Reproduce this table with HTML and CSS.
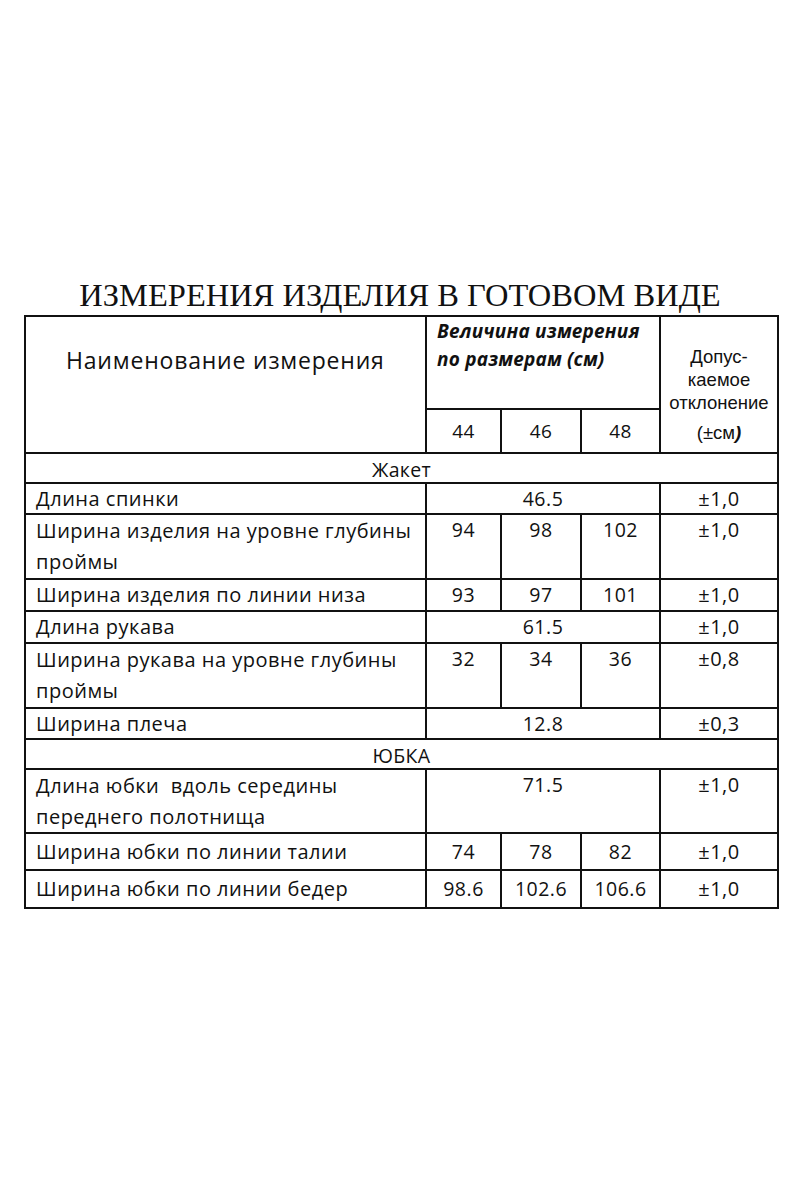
FILE: index.html
```html
<!DOCTYPE html>
<html lang="ru">
<head>
<meta charset="utf-8">
<title>Измерения изделия</title>
<link rel="stylesheet" href="styles.css">
</head>
<body>
<h1 class="title">ИЗМЕРЕНИЯ ИЗДЕЛИЯ В ГОТОВОМ ВИДЕ</h1>
<table class="spec">
  <colgroup>
    <col class="c-name">
    <col class="c-s1">
    <col class="c-s2">
    <col class="c-s3">
    <col class="c-tol">
  </colgroup>
  <tr class="r-head1">
    <th rowspan="2" class="name-h">Наименование измерения</th>
    <th colspan="3" class="size-h">Величина измерения<br>по размерам (см)</th>
    <th rowspan="2" class="tol-h"><span class="tl">Допус-</span><span class="tl">каемое</span><span class="tl">отклонение</span><span class="tl last">(±см<i>)</i></span></th>
  </tr>
  <tr class="r-head2">
    <th class="sz">44</th>
    <th class="sz">46</th>
    <th class="sz">48</th>
  </tr>
  <tr class="r-sec"><td colspan="5" class="sec">Жакет</td></tr>
  <tr class="r-1a">
    <td class="nm">Длина спинки</td>
    <td colspan="3" class="v">46.5</td>
    <td class="tol">±1,0</td>
  </tr>
  <tr class="r-2">
    <td class="nm">Ширина изделия на уровне глубины проймы</td>
    <td class="v">94</td><td class="v">98</td><td class="v">102</td>
    <td class="tol">±1,0</td>
  </tr>
  <tr class="r-1b">
    <td class="nm">Ширина изделия по линии низа</td>
    <td class="v">93</td><td class="v">97</td><td class="v">101</td>
    <td class="tol">±1,0</td>
  </tr>
  <tr class="r-1b">
    <td class="nm">Длина рукава</td>
    <td colspan="3" class="v">61.5</td>
    <td class="tol">±1,0</td>
  </tr>
  <tr class="r-2">
    <td class="nm">Ширина рукава на уровне глубины проймы</td>
    <td class="v">32</td><td class="v">34</td><td class="v">36</td>
    <td class="tol">±0,8</td>
  </tr>
  <tr class="r-1">
    <td class="nm">Ширина плеча</td>
    <td colspan="3" class="v">12.8</td>
    <td class="tol">±0,3</td>
  </tr>
  <tr class="r-sec"><td colspan="5" class="sec">ЮБКА</td></tr>
  <tr class="r-2b">
    <td class="nm">Длина юбки&nbsp; вдоль середины<br>переднего полотнища</td>
    <td colspan="3" class="v">71.5</td>
    <td class="tol">±1,0</td>
  </tr>
  <tr class="r-3">
    <td class="nm">Ширина юбки по линии талии</td>
    <td class="v">74</td><td class="v">78</td><td class="v">82</td>
    <td class="tol">±1,0</td>
  </tr>
  <tr class="r-3b">
    <td class="nm">Ширина юбки по линии бедер</td>
    <td class="v">98.6</td><td class="v">102.6</td><td class="v">106.6</td>
    <td class="tol">±1,0</td>
  </tr>
</table>
</body>
</html>
```
FILE: styles.css
```css
html, body {
  margin: 0;
  padding: 0;
  background: #fff;
  color: #111;
}
body {
  width: 800px;
  height: 1200px;
  font-family: "Open Sans", "Noto Sans", sans-serif;
}
.title {
  margin: 0;
  padding-top: 275px;
  font-family: "Liberation Serif", serif;
  font-weight: normal;
  font-size: 32.5px;
  line-height: 40px;
  text-align: center;
  color: #111;
}
.spec {
  margin-left: 24px;
  width: 755px;
  table-layout: fixed;
  border-collapse: collapse;
}
.c-name { width: 401px; }
.c-s1 { width: 75px; }
.c-s2 { width: 80px; }
.c-s3 { width: 79px; }
.c-tol { width: 118px; }
.spec th, .spec td {
  border: 2px solid #111;
  padding: 0;
  font-weight: normal;
  vertical-align: top;
  font-size: 20px;
  line-height: 29px;
  letter-spacing: 0.5px;
}
.spec .r-head1 { height: 93px; }
.spec .r-head2 { height: 44px; }
.spec .name-h {
  text-align: left;
  padding: 28px 0 0 40px;
  font-size: 23px;
  line-height: 30px;
  letter-spacing: 0.8px;
}
.spec .size-h {
  text-align: left;
  padding: 0 0 0 10px;
  font-weight: bold;
  font-style: italic;
  font-size: 19px;
  line-height: 28px;
  letter-spacing: 0.2px;
}
.spec .tol-h {
  text-align: center;
  padding-top: 28px;
  font-family: "Liberation Sans", Arial, sans-serif;
  font-size: 18.5px;
  line-height: 23px;
  letter-spacing: 0;
}
.tl { display: block; }
.tl.last { margin-top: 7px; }
.tl i { font-style: italic; font-weight: bold; }
.spec .sz {
  vertical-align: middle;
  text-align: center;
  font-size: 19px;
  line-height: 28px;
}
.spec .r-sec { height: 30px; }
.spec .sec {
  vertical-align: middle;
  text-align: center;
  font-size: 19.5px;
  line-height: 25px;
  letter-spacing: 0.3px;
  padding-top: 2px;
}
.spec .r-1a { height: 30px; }
.spec .r-1a td { line-height: 28px; padding-top: 1px; }
.spec .r-1a td.nm { padding-left: 10px; }
.spec .r-1 { height: 31px; }
.spec .r-1b { height: 32px; }
.spec .r-2 { height: 65px; }
.spec .r-2b { height: 64px; }
.spec .r-3 { height: 37px; }
.spec .r-3b { height: 38px; }
.spec .nm {
  padding-left: 10px;
}
.spec .r-2 .nm, .spec .r-2b .nm {
  line-height: 31px;
}
.spec .v {
  text-align: center;
  font-size: 19.5px;
}
.spec .tol {
  text-align: center;
  padding-top: 1px;
  line-height: 28px;
}
.spec .r-3 td, .spec .r-3b td {
  padding-top: 3px;
  line-height: 29px;
}
.spec .r-3 td.nm, .spec .r-3b td.nm { padding-left: 10px; }
```
